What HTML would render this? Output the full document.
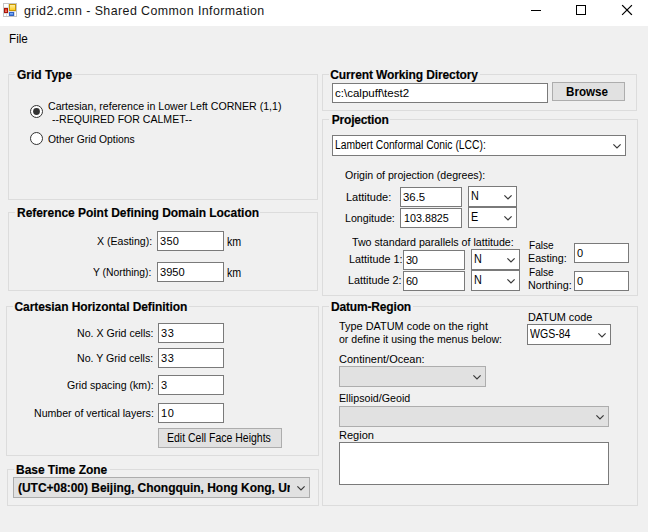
<!DOCTYPE html>
<html><head><meta charset="utf-8"><title>grid2.cmn - Shared Common Information</title>
<style>
html,body{margin:0;padding:0;}
body{width:648px;height:532px;background:#f0f0f0;position:relative;overflow:hidden;
 font-family:"Liberation Sans",Arial,sans-serif;font-size:11px;color:#000;}
.a{position:absolute;}
.t{position:absolute;white-space:nowrap;line-height:13px;height:13px;transform-origin:0 0;}
.b{font-weight:bold;}
.g{font-size:12px;-webkit-text-stroke:0.15px #000;}
.gb{position:absolute;border:1px solid #dcdcdc;box-sizing:border-box;}
.gp{position:absolute;background:#f0f0f0;height:3px;}
.tb{position:absolute;box-sizing:border-box;border:1px solid #7a7a7a;background:#fff;}
.cd{position:absolute;box-sizing:border-box;border:1px solid #adadad;background:#e1e1e1;}
.bt{position:absolute;box-sizing:border-box;border:1px solid #adadad;background:#e1e1e1;}
svg{position:absolute;overflow:visible;}
</style></head><body>

<div class="a" style="left:0;top:0;width:648px;height:26px;background:#fff;"></div>
<svg style="left:3px;top:3px" width="14" height="14" viewBox="0 0 14 14">
 <defs>
  <linearGradient id="gy" x1="0" y1="0" x2="0" y2="1"><stop offset="0" stop-color="#fff0a0"/><stop offset="1" stop-color="#ffcc20"/></linearGradient>
  <linearGradient id="gr" x1="0" y1="0" x2="0" y2="1"><stop offset="0" stop-color="#e03a20"/><stop offset="1" stop-color="#f08070"/></linearGradient>
  <linearGradient id="gbl" x1="0" y1="0" x2="0" y2="1"><stop offset="0" stop-color="#8ab8f8"/><stop offset="1" stop-color="#4a80e0"/></linearGradient>
 </defs>
 <rect x="0" y="0" width="14" height="14" fill="#c4c4c4"/>
 <rect x="1" y="1" width="12" height="12" fill="#dcdcdc"/>
 <rect x="1" y="1" width="4" height="3" fill="#fff"/>
 <rect x="1" y="11" width="2" height="2" fill="#fff"/>
 <rect x="4" y="11" width="1.5" height="2" fill="#fff"/>
 <rect x="12" y="9" width="1" height="4" fill="#fff"/>
 <rect x="6" y="1" width="7" height="7" fill="#c89600"/>
 <rect x="7" y="2" width="5" height="5" fill="url(#gy)"/>
 <rect x="1" y="5" width="4" height="5" fill="#a81408"/>
 <rect x="2" y="6" width="2" height="3" fill="url(#gr)"/>
 <rect x="6" y="9" width="5" height="4" fill="#2f62c4"/>
 <rect x="7" y="10" width="3" height="2" fill="url(#gbl)"/>
</svg>
<svg style="left:531px;top:5px" width="102" height="11" viewBox="0 0 102 11">
 <rect x="0" y="5" width="10" height="1" fill="#000"/>
 <rect x="45.5" y="0.5" width="9" height="9" fill="none" stroke="#000" stroke-width="1"/>
 <path d="M91.5 0.5 L100.5 9.5 M100.5 0.5 L91.5 9.5" stroke="#000" stroke-width="1.15" stroke-linecap="square" fill="none"/>
</svg>
<div class="gb" style="left:8px;top:74px;width:310px;height:126px;"></div><div class="gp" style="left:15.0px;top:73px;width:59.0px;"></div>
<div class="gb" style="left:8px;top:212px;width:310px;height:79px;"></div><div class="gp" style="left:15.0px;top:211px;width:245.0px;"></div>
<div class="gb" style="left:6px;top:306px;width:313px;height:150px;"></div><div class="gp" style="left:13.0px;top:305px;width:176.0px;"></div>
<div class="gb" style="left:7px;top:469px;width:312px;height:37px;"></div><div class="gp" style="left:14.0px;top:468px;width:96.0px;"></div>
<div class="gb" style="left:322px;top:74px;width:315px;height:37px;"></div><div class="gp" style="left:329.0px;top:73px;width:151.0px;"></div>
<div class="gb" style="left:322px;top:119px;width:316px;height:177px;"></div><div class="gp" style="left:329.0px;top:118px;width:61.0px;"></div>
<div class="gb" style="left:322px;top:306px;width:316px;height:200px;"></div><div class="gp" style="left:329.0px;top:305px;width:84.0px;"></div>
<svg style="left:30px;top:105px" width="13" height="13"><circle cx="6.5" cy="6.5" r="6" fill="#fff" stroke="#333"/><circle cx="6.5" cy="6.5" r="3.4" fill="#333"/></svg>
<svg style="left:30px;top:132px" width="13" height="13"><circle cx="6.5" cy="6.5" r="6" fill="#fff" stroke="#333"/></svg>
<div class="tb" style="left:157px;top:231px;width:67px;height:20px;"></div>
<div class="tb" style="left:157px;top:262px;width:67px;height:20px;"></div>
<div class="tb" style="left:158px;top:323px;width:66px;height:20px;"></div>
<div class="tb" style="left:158px;top:348px;width:66px;height:20px;"></div>
<div class="tb" style="left:158px;top:375px;width:66px;height:20px;"></div>
<div class="tb" style="left:158px;top:403px;width:66px;height:20px;"></div>
<div class="bt" style="left:158px;top:428px;width:124px;height:20px;"></div>
<div class="cd" style="left:13px;top:477px;width:297px;height:21px;border-color:#adadad;"></div>
<svg style="left:297px;top:486px" width="9" height="6" viewBox="0 0 9 6"><path d="M0.4 0.3 L4 3.9 L7.6 0.3" fill="none" stroke="#3a3a3a" stroke-width="1.2"/></svg>
<div class="tb" style="left:332px;top:83px;width:216px;height:20px;"></div>
<div class="bt" style="left:552px;top:82px;width:73px;height:19px;"></div>
<div class="tb" style="left:332px;top:135px;width:294px;height:21px;"></div>
<svg style="left:613px;top:144px" width="9" height="6" viewBox="0 0 9 6"><path d="M0.4 0.3 L4 3.9 L7.6 0.3" fill="none" stroke="#3a3a3a" stroke-width="1.2"/></svg>
<div class="tb" style="left:400px;top:187px;width:62px;height:20px;"></div>
<div class="tb" style="left:400px;top:208px;width:62px;height:20px;"></div>
<div class="tb" style="left:468px;top:186px;width:49px;height:21px;"></div>
<svg style="left:504px;top:195px" width="9" height="6" viewBox="0 0 9 6"><path d="M0.4 0.3 L4 3.9 L7.6 0.3" fill="none" stroke="#3a3a3a" stroke-width="1.2"/></svg>
<div class="tb" style="left:468px;top:207px;width:49px;height:21px;"></div>
<svg style="left:504px;top:216px" width="9" height="6" viewBox="0 0 9 6"><path d="M0.4 0.3 L4 3.9 L7.6 0.3" fill="none" stroke="#3a3a3a" stroke-width="1.2"/></svg>
<div class="tb" style="left:403px;top:250px;width:62px;height:20px;"></div>
<div class="tb" style="left:403px;top:271px;width:62px;height:20px;"></div>
<div class="tb" style="left:471px;top:249px;width:49px;height:21px;"></div>
<svg style="left:507px;top:258px" width="9" height="6" viewBox="0 0 9 6"><path d="M0.4 0.3 L4 3.9 L7.6 0.3" fill="none" stroke="#3a3a3a" stroke-width="1.2"/></svg>
<div class="tb" style="left:471px;top:270px;width:49px;height:21px;"></div>
<svg style="left:507px;top:279px" width="9" height="6" viewBox="0 0 9 6"><path d="M0.4 0.3 L4 3.9 L7.6 0.3" fill="none" stroke="#3a3a3a" stroke-width="1.2"/></svg>
<div class="tb" style="left:574px;top:243px;width:55px;height:20px;"></div>
<div class="tb" style="left:574px;top:271px;width:55px;height:20px;"></div>
<div class="tb" style="left:527px;top:324px;width:84px;height:21px;"></div>
<svg style="left:598px;top:333px" width="9" height="6" viewBox="0 0 9 6"><path d="M0.4 0.3 L4 3.9 L7.6 0.3" fill="none" stroke="#3a3a3a" stroke-width="1.2"/></svg>
<div class="cd" style="left:339px;top:366px;width:147px;height:21px;"></div>
<svg style="left:473px;top:375px" width="9" height="6" viewBox="0 0 9 6"><path d="M0.4 0.3 L4 3.9 L7.6 0.3" fill="none" stroke="#3a3a3a" stroke-width="1.2"/></svg>
<div class="cd" style="left:339px;top:406px;width:270px;height:21px;"></div>
<svg style="left:596px;top:415px" width="9" height="6" viewBox="0 0 9 6"><path d="M0.4 0.3 L4 3.9 L7.6 0.3" fill="none" stroke="#3a3a3a" stroke-width="1.2"/></svg>
<div class="tb" style="left:339px;top:442px;width:270px;height:43px;"></div>
<div class="t" id="title" style="left:24.00px;top:5.00px;letter-spacing:0.437px;font-size:12.4px;color:#161616;">grid2.cmn - Shared Common Information</div>
<div class="t" id="file" style="left:8.70px;top:33.20px;letter-spacing:0.000px;font-size:12.4px;transform:scaleX(0.9437);">File</div>
<div class="t b g" id="g1" style="left:17.00px;top:69.00px;letter-spacing:-0.001px;">Grid Type</div>
<div class="t" id="r1a" style="left:48.00px;top:99.69px;letter-spacing:0.000px;transform:scaleX(0.9645);">Cartesian, reference in Lower Left CORNER (1,1)</div>
<div class="t" id="r1b" style="left:52.00px;top:112.69px;letter-spacing:0.000px;transform:scaleX(0.9591);">--REQUIRED FOR CALMET--</div>
<div class="t" id="r2" style="left:48.00px;top:132.69px;letter-spacing:0.000px;transform:scaleX(0.9385);">Other Grid Options</div>
<div class="t b g" id="g2" style="left:17.00px;top:207.00px;letter-spacing:-0.034px;">Reference Point Defining Domain Location</div>
<div class="t" id="xe" style="left:97.00px;top:234.69px;letter-spacing:0.000px;transform:scaleX(0.9598);">X (Easting):</div>
<div class="t" id="xev" style="left:160.00px;top:235.00px;letter-spacing:0.280px;">350</div>
<div class="t" id="km1" style="left:227.00px;top:236.34px;letter-spacing:0.000px;font-size:12px;transform:scaleX(0.8880);">km</div>
<div class="t" id="yn" style="left:93.00px;top:265.69px;letter-spacing:0.000px;transform:scaleX(0.9387);">Y (Northing):</div>
<div class="t" id="ynv" style="left:160.00px;top:265.69px;letter-spacing:0.000px;transform:scaleX(1.0104);">3950</div>
<div class="t" id="km2" style="left:227.00px;top:267.34px;letter-spacing:0.000px;font-size:12px;transform:scaleX(0.8880);">km</div>
<div class="t b g" id="g3" style="left:14.50px;top:301.00px;letter-spacing:-0.087px;">Cartesian Horizontal Definition</div>
<div class="t" id="nx" style="left:77.00px;top:326.69px;letter-spacing:0.000px;transform:scaleX(0.9634);">No. X Grid cells:</div>
<div class="t" id="nxv" style="left:161.00px;top:327.00px;letter-spacing:0.600px;">33</div>
<div class="t" id="ny" style="left:77.00px;top:351.69px;letter-spacing:0.000px;transform:scaleX(0.9637);">No. Y Grid cells:</div>
<div class="t" id="nyv" style="left:161.00px;top:352.00px;letter-spacing:0.600px;">33</div>
<div class="t" id="gs" style="left:67.00px;top:378.69px;letter-spacing:0.000px;transform:scaleX(0.9642);">Grid spacing (km):</div>
<div class="t" id="gsv" style="left:161.00px;top:379.00px;letter-spacing:0.600px;">3</div>
<div class="t" id="nv" style="left:34.00px;top:406.69px;letter-spacing:0.000px;transform:scaleX(0.9608);">Number of vertical layers:</div>
<div class="t" id="nvv" style="left:161.00px;top:407.00px;letter-spacing:0.600px;">10</div>
<div class="t" id="ecf" style="left:167.00px;top:432.34px;letter-spacing:0.000px;font-size:12px;transform:scaleX(0.8743);">Edit Cell Face Heights</div>
<div class="t b g" id="g4" style="left:16.00px;top:464.00px;letter-spacing:-0.040px;">Base Time Zone</div>
<div class="t b g" id="tz" style="left:18.00px;top:482.00px;letter-spacing:-0.035px;width:272.4px;overflow:hidden;">(UTC+08:00) Beijing, Chongquin, Hong Kong, Ur</div>
<div class="t b g" id="g5" style="left:330.30px;top:69.00px;letter-spacing:-0.116px;">Current Working Directory</div>
<div class="t" id="cwd" style="left:335.00px;top:86.69px;letter-spacing:0.000px;transform:scaleX(1.0470);">c:\calpuff\test2</div>
<div class="t b" id="br" style="left:566.00px;top:86.34px;letter-spacing:0.000px;font-size:12px;transform:scaleX(0.9697);">Browse</div>
<div class="t b g" id="g6" style="left:331.70px;top:114.00px;letter-spacing:-0.180px;">Projection</div>
<div class="t" id="lcc" style="left:335.00px;top:139.34px;letter-spacing:0.000px;font-size:12px;transform:scaleX(0.8595);">Lambert Conformal Conic (LCC):</div>
<div class="t" id="orig" style="left:345.00px;top:168.69px;letter-spacing:0.000px;transform:scaleX(0.9628);">Origin of projection (degrees):</div>
<div class="t" id="lat" style="left:346.00px;top:191.00px;letter-spacing:0.000px;">Lattitude:</div>
<div class="t" id="latv" style="left:403.00px;top:190.69px;letter-spacing:0.000px;transform:scaleX(1.0322);">36.5</div>
<div class="t" id="latn" style="left:471.00px;top:190.34px;letter-spacing:0.000px;font-size:12px;transform:scaleX(0.9000);">N</div>
<div class="t" id="lon" style="left:345.00px;top:211.69px;letter-spacing:0.000px;transform:scaleX(0.9699);">Longitude:</div>
<div class="t" id="lonv" style="left:404.00px;top:211.69px;letter-spacing:0.000px;transform:scaleX(0.9768);">103.8825</div>
<div class="t" id="lone" style="left:471.00px;top:211.34px;letter-spacing:0.000px;font-size:12px;transform:scaleX(0.9000);">E</div>
<div class="t" id="two" style="left:352.00px;top:235.69px;letter-spacing:0.000px;transform:scaleX(0.9688);">Two standard parallels of lattitude:</div>
<div class="t" id="l1" style="left:349.00px;top:252.69px;letter-spacing:0.000px;transform:scaleX(0.9817);">Lattitude 1:</div>
<div class="t" id="l1v" style="left:406.00px;top:254.00px;letter-spacing:-0.350px;">30</div>
<div class="t" id="l1n" style="left:474.00px;top:253.34px;letter-spacing:0.000px;font-size:12px;transform:scaleX(0.9000);">N</div>
<div class="t" id="l2" style="left:348.00px;top:273.69px;letter-spacing:0.000px;transform:scaleX(0.9817);">Lattitude 2:</div>
<div class="t" id="l2v" style="left:406.00px;top:275.00px;letter-spacing:-0.350px;">60</div>
<div class="t" id="l2n" style="left:474.00px;top:274.34px;letter-spacing:0.000px;font-size:12px;transform:scaleX(0.9000);">N</div>
<div class="t" id="f1" style="left:529.00px;top:238.69px;letter-spacing:0.000px;transform:scaleX(0.9203);">False</div>
<div class="t" id="fe" style="left:528.00px;top:251.69px;letter-spacing:0.000px;transform:scaleX(0.9742);">Easting:</div>
<div class="t" id="fev" style="left:577.00px;top:247.00px;letter-spacing:0.600px;">0</div>
<div class="t" id="f2" style="left:529.00px;top:265.69px;letter-spacing:0.000px;transform:scaleX(0.9203);">False</div>
<div class="t" id="fn" style="left:528.00px;top:278.69px;letter-spacing:0.000px;transform:scaleX(0.9776);">Northing:</div>
<div class="t" id="fnv" style="left:577.00px;top:275.00px;letter-spacing:0.600px;">0</div>
<div class="t b g" id="g7" style="left:331.00px;top:301.00px;letter-spacing:-0.164px;">Datum-Region</div>
<div class="t" id="ty1" style="left:339.00px;top:319.69px;letter-spacing:0.000px;transform:scaleX(0.9916);">Type DATUM code on the right</div>
<div class="t" id="ty2" style="left:339.00px;top:332.69px;letter-spacing:0.000px;transform:scaleX(0.9592);">or define it using the menus below:</div>
<div class="t" id="dc" style="left:528.00px;top:310.69px;letter-spacing:0.000px;transform:scaleX(0.9873);">DATUM code</div>
<div class="t" id="wgs" style="left:530.00px;top:328.34px;letter-spacing:0.000px;font-size:12px;transform:scaleX(0.8776);">WGS-84</div>
<div class="t" id="co" style="left:339.00px;top:353.00px;letter-spacing:0.000px;">Continent/Ocean:</div>
<div class="t" id="eg" style="left:339.00px;top:391.69px;letter-spacing:0.000px;transform:scaleX(0.9706);">Ellipsoid/Geoid</div>
<div class="t" id="rg" style="left:339.00px;top:428.69px;letter-spacing:0.000px;transform:scaleX(1.0041);">Region</div>
</body></html>
